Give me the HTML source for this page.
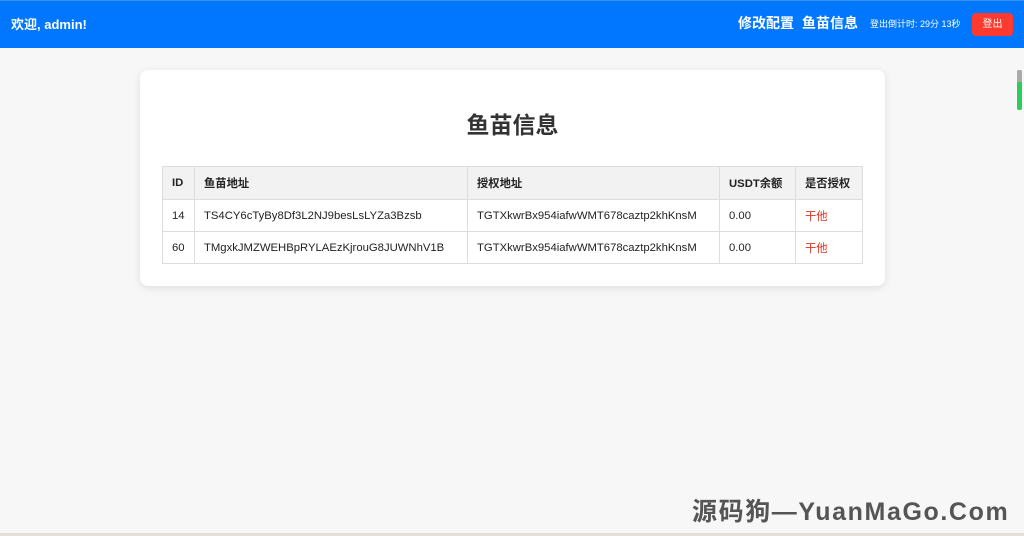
<!DOCTYPE html>
<html><head><meta charset="utf-8"><style>
*{margin:0;padding:0;box-sizing:border-box}
body{width:1024px;height:536px;background:#f7f7f7;font-family:"Liberation Sans","Noto Sans CJK SC",sans-serif;position:relative;overflow:hidden}
.top{position:absolute;left:0;top:0;width:1024px;height:48px;background:#0077fe;border-top:1px solid #3a8fe8;color:#fff}
.top .w{position:absolute;left:11px;top:13px;font-size:13px;font-weight:bold}
.top .n{position:absolute;top:12px;font-size:14px;font-weight:bold}
.top .c{position:absolute;left:870px;top:16px;font-size:9px}
.top .b{position:absolute;left:972px;top:12px;width:41px;height:23px;background:#ff3b30;border-radius:4px;font-size:10px;text-align:center;line-height:23px}
.card{position:absolute;left:140px;top:70px;width:745px;height:216px;background:#fff;border-radius:8px;box-shadow:0 2px 8px rgba(0,0,0,.1)}
h1{position:absolute;left:0;width:100%;top:36px;text-align:center;font-size:23px;color:#333}
table{position:absolute;left:22px;top:96px;border-collapse:collapse;font-size:11.3px;color:#222}
td,th{border:1px solid #ddd;padding:0 9px;text-align:left;height:32px}
th{background:#f2f2f2;height:33px}
.r{color:#e0301e}
.wm{position:absolute;left:692px;top:492px;font-size:25px;font-weight:bold;color:#555;letter-spacing:1.6px;white-space:nowrap}
.sb{position:absolute;left:1017px;top:70px;width:5px;height:40px;background:#2ecc5e;border-radius:2px}
.sb:before{content:"";position:absolute;left:0;top:0;width:5px;height:12px;background:#aaa;border-radius:2px 2px 0 0}
.bot{position:absolute;left:0;top:533px;width:1024px;height:3px;background:#e4e0d8}
</style></head><body>
<div class="top"><div class="w">欢迎, admin!</div>
<div class="n" style="left:738px">修改配置</div><div class="n" style="left:802px">鱼苗信息</div>
<div class="c">登出倒计时: 29分 13秒</div><div class="b">登出</div></div>
<div class="card"><h1>鱼苗信息</h1>
<table>
<tr><th style="width:32px">ID</th><th style="width:273px">鱼苗地址</th><th style="width:252px">授权地址</th><th style="width:76px">USDT余额</th><th style="width:67px">是否授权</th></tr>
<tr><td>14</td><td>TS4CY6cTyBy8Df3L2NJ9besLsLYZa3Bzsb</td><td>TGTXkwrBx954iafwWMT678caztp2khKnsM</td><td>0.00</td><td class="r">干他</td></tr>
<tr><td>60</td><td>TMgxkJMZWEHBpRYLAEzKjrouG8JUWNhV1B</td><td>TGTXkwrBx954iafwWMT678caztp2khKnsM</td><td>0.00</td><td class="r">干他</td></tr>
</table></div>
<div class="sb"></div>
<div class="wm">源码狗—YuanMaGo.Com</div>
<div class="bot"></div>
</body></html>
